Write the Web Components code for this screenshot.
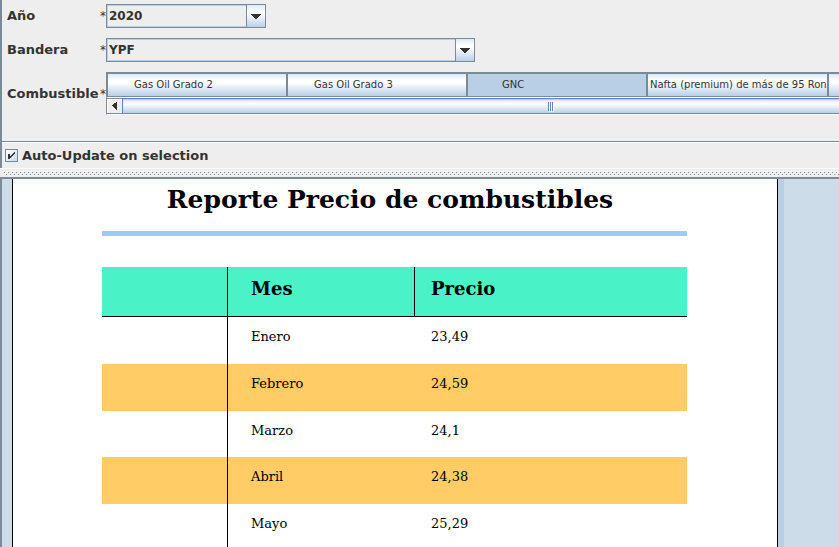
<!DOCTYPE html>
<html lang="es">
<head>
<meta charset="utf-8">
<title>Reporte Precio de combustibles</title>
<style>
html, body { height: 100%; }
body { margin: 0; overflow: hidden; background: #eee; color: #333; font-family: "DejaVu Sans", sans-serif; }
</style>
</head>
<body>
<report-viewer></report-viewer>
<script>
const define = (name, html, setup) => {
  const tpl = document.createElement('template');
  tpl.innerHTML = html;
  customElements.define(name, class extends HTMLElement {
    connectedCallback() {
      if (this.shadowRoot) return;
      this.attachShadow({ mode: 'open' }).append(tpl.content.cloneNode(true));
      if (setup) setup(this, this.shadowRoot);
    }
  });
};

define('combo-field', `
<style>
:host { display: grid; grid-template-columns: 93px 6px var(--combo-width, 160px); align-items: center; height: 24px; font: bold 13px/14px "DejaVu Sans", sans-serif; }
.star { font-weight: normal; font-size: 12px; }
.box { display: flex; position: relative; height: 24px; box-sizing: border-box; border: 1px solid #7a8a99; font-size: 12px; }
select { appearance: none; flex: 1; min-width: 0; margin: 0; padding: 0 20px 0 1px; border: 1px solid #b8cfe5; border-radius: 0; background: #eee; color: #333; font: inherit; }
.arrow { position: absolute; inset: 0 0 0 auto; width: 18px; border-left: 1px solid #7a8a99; background: linear-gradient(#dde8f3, #fff 30%, #fff 40%, #b8cfe5); display: grid; place-items: center; pointer-events: none; }
svg { display: block; }
</style>
<label for="s"></label><span class="star">*</span>
<div class="box"><select id="s"><option></option></select>
<span class="arrow"><svg width="10" height="5" shape-rendering="crispEdges"><path d="M0 0h10v1h-1v1h-1v1h-1v1h-1v1h-2v-1h-1v-1h-1v-1h-1v-1h-1z" fill="#333"/></svg></span></div>`,
(el, root) => {
  root.querySelector('label').textContent = el.getAttribute('label');
  root.querySelector('option').textContent = el.getAttribute('value');
});

define('fuel-option', `
<style>
:host { display: block; flex: 0 0 180px; }
button { display: block; width: 100%; height: 25px; box-sizing: border-box; margin: 0; padding: 0 0 0 var(--indent, 26px); border: solid #7a8a99; border-width: 2px 2px 1px 0; border-radius: 0; background: linear-gradient(#dde8f3, #fff 30%, #fff 40%, #b8cfe5); color: #333; font: 10px/12px "DejaVu Sans", sans-serif; text-align: left; white-space: nowrap; }
:host([selected]) button { background: #b8cfe5; }
</style>
<button type="button"><slot></slot></button>`,
(el, root) => root.querySelector('button').setAttribute('aria-pressed', el.hasAttribute('selected')));

define('scroll-strip', `
<style>
:host { display: flex; height: 17px; border-left: 1px solid #7a8a99; border-bottom: 1px solid #fff; box-sizing: border-box; }
button { flex: none; width: 15px; margin: 0; padding: 0; border: solid #7a8a99; border-width: 1px 0; background: #eee; display: grid; place-items: center; box-shadow: inset 1px 1px #fff; }
.thumb { flex: 0 0 856px; box-sizing: border-box; border: solid #6382bf; border-width: 1px 1px 0; border-bottom: 1px solid #7a8a99; background: linear-gradient(#b8cfe5 1px, #dde8f3 1px, #fff 35%, #b8cfe5); display: flex; align-items: center; justify-content: center; gap: 1px; }
i { width: 1px; height: 9px; background: #6382bf; box-shadow: 1px 1px #fff; }
</style>
<button type="button" aria-label="Desplazar a la izquierda"><svg width="5" height="8" shape-rendering="crispEdges"><path d="M4 0h1v8h-1v-1h-1v-1h-1v-1h-1v-1h-1v-1h1v-1h1v-1h1z" fill="#333"/></svg></button>
<div class="thumb"><i></i><i></i><i></i></div>`);

define('fuel-picker', `
<style>
:host { display: grid; grid-template-columns: 93px 6px minmax(0, 1fr); align-items: center; font: bold 13px/14px "DejaVu Sans", sans-serif; }
.star { font-weight: normal; font-size: 12px; }
.view { overflow: hidden; }
.cells { display: flex; border-left: 2px solid #7a8a99; border-bottom: 1px solid #fff; }
</style>
<span id="l">Combustible</span><span class="star">*</span>
<div class="view"><div class="cells" role="group" aria-labelledby="l"><slot></slot></div><scroll-strip></scroll-strip></div>`);

define('update-toggle', `
<style>
:host { display: block; padding: 7px 3px 6px; font: bold 13px/13px "DejaVu Sans", sans-serif; }
label { display: flex; align-items: flex-start; gap: 4px; }
input { appearance: none; box-sizing: border-box; flex: none; width: 13px; height: 13px; margin: 0; border: 1px solid #7a8a99; background: linear-gradient(135deg, #fff, #c5d8ea); }
.tick { position: relative; display: flex; }
svg { position: absolute; left: 3px; top: 3px; pointer-events: none; visibility: hidden; }
input:checked + svg { visibility: visible; }
</style>
<label><span class="tick"><input type="checkbox" checked><svg width="7" height="7" shape-rendering="crispEdges"><path d="M0 2h2v2h1v-1h1v-1h1v-1h1v-1h1v2h-1v1h-1v1h-1v1h-1v1h-1v1h-2z" fill="#333"/></svg></span><span><slot></slot></span></label>`);

define('split-bar', `
<style>
:host { display: block; height: 11px; box-sizing: border-box; border-top: 1px solid #fff; border-bottom: 2px solid #7a8a99; padding: 2px 0 2px 3px; margin-left: -2px; background: #eee; }
svg { display: block; width: 100%; height: 4px; }
</style>
<svg shape-rendering="crispEdges" aria-hidden="true"><defs><pattern id="d" width="4" height="4" patternUnits="userSpaceOnUse"><path d="M0 0h1v1h-1zM2 2h1v1h-1z" fill="#fff"/><path d="M1 1h1v1h-1zM3 3h1v1h-1z" fill="#7a8a99"/></pattern></defs><rect width="100%" height="4" fill="url(#d)"/></svg>`);

define('price-table', `
<style>
:host { display: block; }
table { width: 100%; table-layout: fixed; border-collapse: separate; border-spacing: 0; color: #000; font: 13px/14px "DejaVu Serif", serif; }
th, td { box-sizing: border-box; height: 47px; padding: 0 0 0 16px; text-align: left; vertical-align: top; }
th { height: 50px; padding-top: 11px; font: bold 18px/22px "DejaVu Serif", serif; background: #4af2c8; border-bottom: 1px solid #000; }
td { padding-top: 13px; }
.a { width: 126px; border-right: 1px solid #000; }
.b { width: 187px; padding-left: 23px; }
th.b { border-right: 1px solid #000; }
tbody tr:nth-child(even) { background: #fc6; }
tbody tr:nth-child(4n+3) td { height: 46px; }
</style>
<table><thead><tr><th class="a"></th><th class="b">Mes</th><th>Precio</th></tr></thead><tbody></tbody></table>`,
(el, root) => {
  const body = root.querySelector('tbody');
  for (const [mes, precio] of [['Enero','23,49'],['Febrero','24,59'],['Marzo','24,1'],['Abril','24,38'],['Mayo','25,29']]) {
    const row = body.insertRow();
    row.insertCell().className = 'a';
    const m = row.insertCell(); m.className = 'b'; m.textContent = mes;
    row.insertCell().textContent = precio;
  }
});

define('report-page', `
<style>
:host { display: block; flex: 1; min-height: 0; overflow: hidden; background: #ccdde9; padding: 0 61px 0 10px; }
.page { height: 100%; box-sizing: border-box; padding: 5px 90px 0 89px; background: #fff; border: solid #000; border-width: 0 1px; box-shadow: 6px 0 #b8cfe5; }
h1 { margin: 0 9px 0 0; padding: 0 0 16px; font: bold 25px/31px "DejaVu Serif", serif; color: #000; text-align: center; white-space: nowrap; }
hr { margin: 0 0 31px; border: 0; height: 5px; background: #9cf; }
</style>
<div class="page"><h1>Reporte Precio de combustibles</h1><hr><price-table></price-table></div>`);

define('report-viewer', `
<style>
:host { display: flex; flex-direction: column; height: 100%; box-sizing: border-box; border-left: 2px solid #7a8a99; }
.params { display: flex; flex-direction: column; gap: 10px; padding: 4px 0 26px 5px; border-bottom: 1px solid #7a8a99; box-shadow: 0 1px #fff; }
.wide { --combo-width: 369px; }
</style>
<div class="params">
<combo-field label="Año" value="2020"></combo-field>
<combo-field class="wide" label="Bandera" value="YPF"></combo-field>
<fuel-picker>
<fuel-option>Gas Oil Grado 2</fuel-option><fuel-option>Gas Oil Grado 3</fuel-option><fuel-option selected style="--indent:34px">GNC</fuel-option><fuel-option style="--indent:2px">Nafta (premium) de más de 95 Ron</fuel-option><fuel-option></fuel-option>
</fuel-picker>
</div>
<update-toggle>Auto-Update on selection</update-toggle>
<split-bar></split-bar>
<report-page></report-page>`);
</script>
</body>
</html>
